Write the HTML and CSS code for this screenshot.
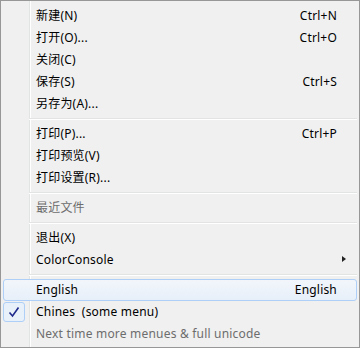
FILE: index.html
```html
<!DOCTYPE html>
<html>

<head>
  <title>Menu</title>
  <link rel="stylesheet" href="styles.css">
</head>

<body>
  <div class="menu">
    <div class="item"><span class="label">新建(N)</span><span class="key">Ctrl+N</span></div>
    <div class="item"><span class="label">打开(O)...</span><span class="key">Ctrl+O</span></div>
    <div class="item"><span class="label">关闭(C)</span></div>
    <div class="item"><span class="label">保存(S)</span><span class="key">Ctrl+S</span></div>
    <div class="item"><span class="label">另存为(A)...</span></div>
    <div class="sep"></div>
    <div class="item"><span class="label">打印(P)...</span><span class="key">Ctrl+P</span></div>
    <div class="item"><span class="label">打印预览(V)</span></div>
    <div class="item"><span class="label">打印设置(R)...</span></div>
    <div class="sep"></div>
    <div class="item disabled"><span class="label">最近文件</span></div>
    <div class="sep"></div>
    <div class="item"><span class="label">退出(X)</span></div>
    <div class="item"><span class="label">ColorConsole</span><span class="arrow"></span></div>
    <div class="sep"></div>
    <div class="item hover"><span class="label">English</span><span class="key">English</span></div>
    <div class="item">
      <span class="check">
        <svg width="12" height="12" viewBox="0 0 12 12"><path d="M1.5 6.5 L4.5 10 L10.5 1.5" fill="none" stroke="#1e2a8c" stroke-width="1.6"/></svg>
      </span>
      <span class="label">Chines&nbsp; (some menu)</span>
    </div>
    <div class="item disabled"><span class="label">Next time more menues &amp; full unicode</span></div>
  </div>
</body>

</html>
```

FILE: styles.css
```css
html,
body {
  margin: 0;
  padding: 0;
  background: #f0f0f0;
}

body {
  font-family: "Noto Sans", "Noto Sans CJK SC", sans-serif;
  font-size: 12px;
  letter-spacing: .2px;
  color: #000;
}

.menu {
  width: 360px;
  height: 348px;
  box-sizing: border-box;
  border: 1px solid #979797;
  padding: 4px 0 2px;
  background-color: #f0f0f0;
  background-image: linear-gradient(to right, transparent 28px, #e2e3e3 28px, #e2e3e3 29px, #fff 29px, #fff 30px, transparent 30px);
}

.item {
  position: relative;
  display: flex;
  align-items: center;
  height: 22px;
  margin: 0 2px;
  padding: 0 19px 0 32px;
  box-sizing: border-box;
  border: 1px solid transparent;
  border-radius: 3px;
  line-height: 20px;
}

.label {
  flex: 1;
  white-space: nowrap;
}

.key {
  white-space: nowrap;
}

.disabled {
  color: #6d6d6d;
}

.hover {
  border-color: #aecff7;
  background: linear-gradient(to bottom, #f2f6fb, #e7eff9);
}

.check {
  position: absolute;
  left: -1px;
  top: 0;
  width: 22px;
  height: 20px;
  box-sizing: border-box;
  border: 1px solid #aecff7;
  border-radius: 3px;
  background: #e8f0f9;
  display: flex;
  align-items: center;
  justify-content: center;
}

.arrow {
  position: absolute;
  right: 10px;
  top: 6px;
  width: 0;
  height: 0;
  border-top: 3.5px solid transparent;
  border-bottom: 3.5px solid transparent;
  border-left: 4px solid #222;
}

.sep {
  height: 8px;
  margin: 0 2px 0 28px;
  box-sizing: border-box;
  padding-top: 3px;
}

.sep::before {
  content: "";
  display: block;
  height: 1px;
  background: #e2e3e3;
  border-bottom: 1px solid #fff;
}
```
